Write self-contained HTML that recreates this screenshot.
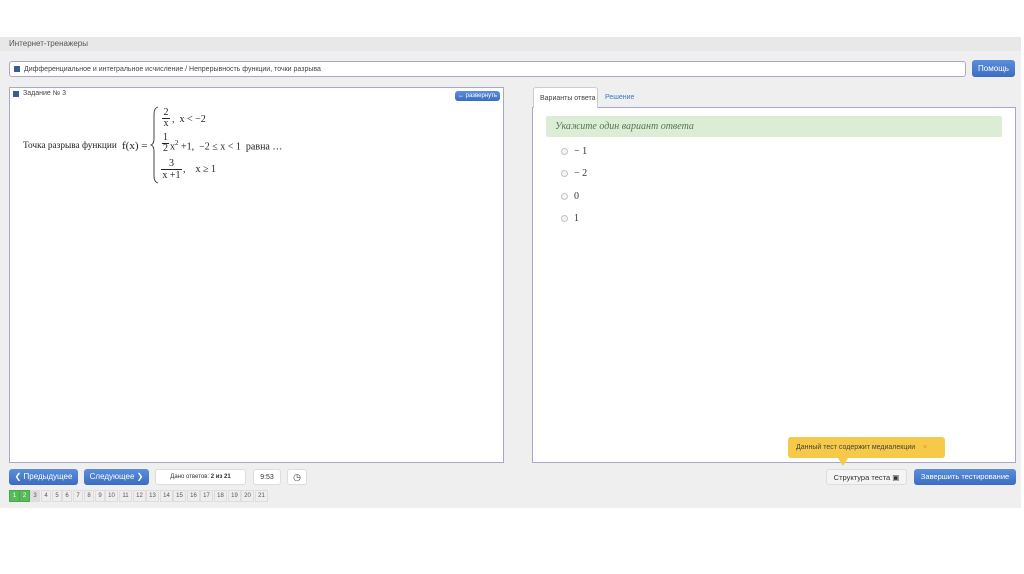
<!DOCTYPE html>
<html><head><meta charset="utf-8"><style>
*{box-sizing:border-box;margin:0;padding:0}
body{width:1024px;height:574px;background:#fff;font-family:"Liberation Sans",sans-serif;position:relative;overflow:hidden;color:#333}
.band{position:absolute;left:0;top:37px;width:1021px;height:471px;background:#efefef}
.hdr{position:absolute;left:0;top:37px;width:1021px;height:14px;background:#e8e8e8;font-size:8px;color:#555;padding:2px 9px}
.abs{position:absolute}
.crumb{left:9px;top:61px;width:957px;height:16px;background:#fff;border:1px solid #a8a8c8;border-radius:3px;font-size:7px;color:#444;padding:4px 0 0 14px}
.sq{position:absolute;width:6px;height:6px;background:#3a5a9a;left:4px;top:4px}
.btn{background:linear-gradient(#5b8fdc,#3a6dc0);color:#fff;border-radius:3px;font-size:8px;text-align:center}
.panel{background:#fff;border:1px solid #a8a8c8}
.math{font-family:"Liberation Serif",serif;color:#222}
.wbtn{background:#fff;border:1px solid #ddd;border-radius:3px;font-size:7px;text-align:center;color:#333}
.pg{position:absolute;top:490px;height:12px;width:11px;background:#eee;border:1px solid #ddd;font-size:6px;text-align:center;line-height:10px;color:#555}
.radio{position:absolute;left:561px;width:7px;height:7px;border:1px solid #c4c4c4;border-radius:50%;background:#f4f4f4}
.opt{position:absolute;left:574px;font-family:"Liberation Serif",serif;font-size:10px;color:#333}
</style></head><body>
<div class="band"></div>
<div class="hdr">Интернет-тренажеры</div>
<div class="abs crumb"><div class="sq"></div>Дифференциальное и интегральное исчисление / Непрерывность функции, точки разрыва</div>
<div class="abs btn" style="left:972px;top:60px;width:43px;height:17px;line-height:17px">Помощь</div>

<div class="abs panel" style="left:9px;top:87px;width:495px;height:376px"></div>
<div class="abs" style="left:13px;top:91px;width:6px;height:6px;background:#3a5a9a"></div>
<div class="abs" style="left:23px;top:90px;font-size:7px;color:#444">Задание № 3</div>
<div class="abs btn" style="left:455px;top:91px;width:45px;height:10px;line-height:10px;font-size:6px">↔ развернуть</div>

<div class="abs math" style="left:23px;top:141px;font-size:9.3px">Точка разрыва функции</div>
<div class="abs math" style="left:122px;top:140px;font-size:11px">f(x) =</div>
<svg class="abs" style="left:150px;top:106px" width="10" height="78" viewBox="0 0 10 78"><path d="M8 1 Q4 2 4 8 L4 33 Q4 38 1 39 Q4 40 4 45 L4 70 Q4 76 8 77" fill="none" stroke="#333" stroke-width="0.9"/></svg>
<div class="abs math" style="left:162px;top:108px;font-size:10px;text-align:center;width:8px;line-height:10px">2<div style="border-top:1px solid #222">x</div></div>
<div class="abs math" style="left:172px;top:114px;font-size:10px">,&nbsp; x &lt; −2</div>
<div class="abs math" style="left:162px;top:133px;font-size:10px;text-align:center;width:7px;line-height:10px">1<div style="border-top:1px solid #222">2</div></div>
<div class="abs math" style="left:170px;top:139px;font-size:10px">x<sup style="font-size:7px">2</sup> +1,&nbsp; −2 ≤ x &lt; 1&nbsp; равна …</div>
<div class="abs math" style="left:161px;top:158px;font-size:10px;text-align:center;width:21px;line-height:11px">3<div style="border-top:1px solid #222">x +1</div></div>
<div class="abs math" style="left:183px;top:164px;font-size:10px">,&nbsp;&nbsp;&nbsp; x ≥ 1</div>

<div class="abs panel" style="left:532px;top:107px;width:484px;height:356px"></div>
<div class="abs" style="left:533px;top:87px;width:65px;height:21px;background:#fff;border:1px solid #ccc;border-bottom:none;border-radius:3px 3px 0 0;font-size:7px;color:#444;padding:7px 0 0 6px">Варианты ответа</div>
<div class="abs" style="left:605px;top:94px;font-size:7px;color:#3a7ac0">Решение</div>
<div class="abs" style="left:546px;top:116px;width:456px;height:21px;background:#dcedd6;border-radius:2px;font-family:'Liberation Serif',serif;font-style:italic;font-size:10px;color:#557755;padding:5px 0 0 9px">Укажите один вариант ответа</div>
<div class="radio" style="top:148px"></div><div class="opt" style="top:146px">− 1</div>
<div class="radio" style="top:170px"></div><div class="opt" style="top:168px">− 2</div>
<div class="radio" style="top:193px"></div><div class="opt" style="top:191px">0</div>
<div class="radio" style="top:215px"></div><div class="opt" style="top:213px">1</div>

<div class="abs btn" style="left:9px;top:469px;width:69px;height:16px;line-height:16px">❮ Предыдущее</div>
<div class="abs btn" style="left:84px;top:469px;width:65px;height:16px;line-height:16px">Следующее ❯</div>
<div class="abs wbtn" style="left:155px;top:469px;width:91px;height:16px;line-height:15px;font-size:6px">Дано ответов: <b>2 из 21</b></div>
<div class="abs wbtn" style="left:253px;top:469px;width:28px;height:16px;line-height:15px">9:53</div>
<div class="abs wbtn" style="left:287px;top:469px;width:20px;height:16px;line-height:15px;font-size:9px">◷</div>

<div class="pg" style="left:9px;background:#5cb85c;color:#fff;border-color:#4a4">1</div>
<div class="pg" style="left:19px;background:#5cb85c;color:#fff;border-color:#4a4">2</div>
<div class="pg" style="left:30px;width:10px;background:#ddd">3</div>
<div class="pg" style="left:41px;width:10px">4</div>
<div class="pg" style="left:52px;width:10px">5</div>
<div class="pg" style="left:62px;width:10px">6</div>
<div class="pg" style="left:73px;width:10px">7</div>
<div class="pg" style="left:84px;width:10px">8</div>
<div class="pg" style="left:95px;width:10px">9</div>
<div class="pg" style="left:105px;width:13px">10</div>
<div class="pg" style="left:119px;width:13px">11</div>
<div class="pg" style="left:133px;width:13px">12</div>
<div class="pg" style="left:146px;width:13px">13</div>
<div class="pg" style="left:160px;width:13px">14</div>
<div class="pg" style="left:173px;width:13px">15</div>
<div class="pg" style="left:187px;width:13px">16</div>
<div class="pg" style="left:200px;width:13px">17</div>
<div class="pg" style="left:214px;width:13px">18</div>
<div class="pg" style="left:228px;width:13px">19</div>
<div class="pg" style="left:241px;width:13px">20</div>
<div class="pg" style="left:255px;width:13px">21</div>

<div class="abs" style="left:788px;top:437px;width:157px;height:21px;background:#f7c948;border-radius:3px;font-size:7px;color:#444;padding:7px 0 0 8px">Данный тест содержит медиалекции <span style="color:#e08a3a;margin-left:6px">×</span></div>
<div class="abs" style="left:838px;top:458px;width:0;height:0;border-left:5px solid transparent;border-right:5px solid transparent;border-top:8px solid #f7c948"></div>
<div class="abs wbtn" style="left:826px;top:469px;width:81px;height:16px;line-height:15px;font-size:7.5px;background:#f4f4f4">Структура теста ▣</div>
<div class="abs btn" style="left:914px;top:469px;width:102px;height:16px;line-height:16px;font-size:7.5px">Завершить тестирование</div>
</body></html>
